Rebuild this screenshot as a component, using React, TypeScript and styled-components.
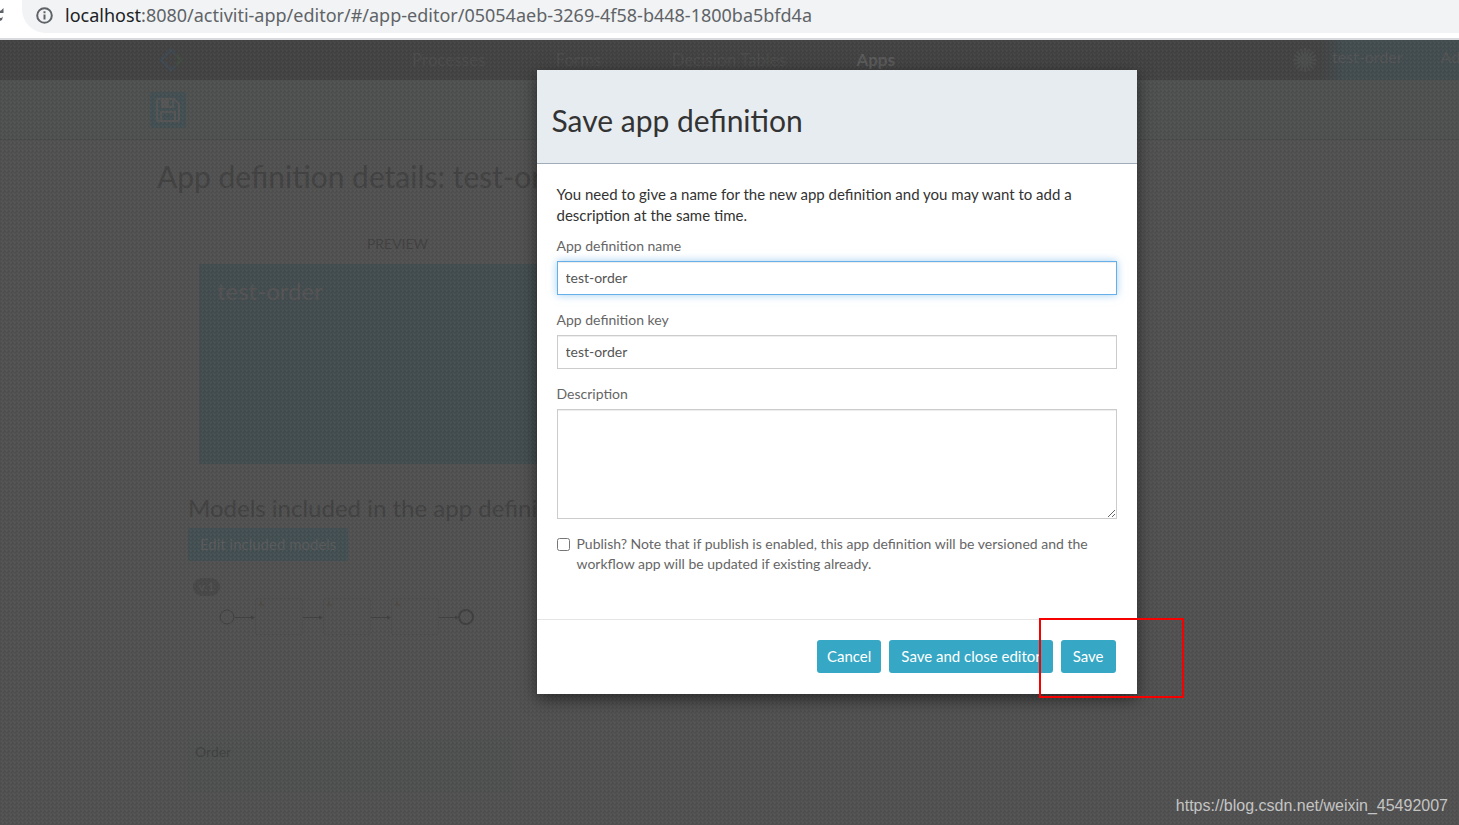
import React from "react";
import styled, { createGlobalStyle, css } from "styled-components";

const GlobalStyle = createGlobalStyle`
  *, *::before, *::after { box-sizing: border-box; }
  html, body, #root { height: 100%; }
  body {
    margin: 0;
    overflow: hidden;
    background: #515151;
    color: #333333;
    font-family: Lato, "Open Sans", sans-serif;
    font-size: 14px;
    line-height: 20px;
  }
  h1, h2, h3, p { margin: 0; font-weight: 400; }
  button, input, textarea { font: inherit; }
`;

const Shell = styled.div`
  display: flex;
  flex-direction: column;
  min-height: 100vh;
`;

const BrowserBar = styled.div`
  display: flex;
  align-items: flex-start;
  gap: 16px;
  height: 40px;
  background: #ffffff;
  border-bottom: 2px solid #d8dade;
  overflow: hidden;
`;

const ReloadButton = styled.button`
  width: 6px;
  height: 36px;
  padding: 0;
  border: 0;
  background: none;
  display: flex;
  justify-content: flex-end;
  align-items: flex-start;
`;

const Address = styled.div`
  flex: 1;
  display: flex;
  align-items: center;
  gap: 12px;
  height: 33px;
  padding: 0 0 3px 14px;
  background: #f1f3f4;
  border-radius: 0 0 0 24px;
`;

const Url = styled.span`
  font-family: "Noto Sans", "Open Sans", sans-serif;
  font-size: 18px;
  line-height: 24px;
  color: #5f6368;
  white-space: nowrap;
`;

const Host = styled.span`
  color: #202124;
`;

const Page = styled.div`
  position: relative;
  flex: 1;
  overflow: hidden;
  background: #515151;
`;

const Texture = styled.div`
  position: absolute;
  inset: 0;
  pointer-events: none;
  background-image:
    linear-gradient(45deg, rgba(0, 0, 0, 0.05) 25%, transparent 25% 75%, rgba(0, 0, 0, 0.05) 75%),
    linear-gradient(-45deg, rgba(255, 255, 255, 0.03) 25%, transparent 25% 75%, rgba(255, 255, 255, 0.03) 75%);
  background-size: 4px 4px;
  background-position: 0 0, 2px 2px;
`;

const TopNav = styled.header`
  display: flex;
  justify-content: space-between;
  height: 40px;
  padding-left: 158px;
  background: #434343;
  font-size: 17px;
  line-height: 40px;
`;

const NavStart = styled.div`
  display: flex;
  align-items: center;
  gap: 228px;
`;

const NavLinks = styled.nav`
  display: flex;
  gap: 70px;
`;

const NavLink = styled.a<{ $active?: boolean }>`
  color: ${(p) => (p.$active ? "#5a5a5a" : "#4b4b4b")};
  text-decoration: none;
  font-weight: ${(p) => (p.$active ? 700 : 400)};
`;

const NavEnd = styled.div`
  display: flex;
  align-items: center;
  gap: 4px;
`;

const Account = styled.div`
  display: flex;
  gap: 38px;
  width: 138px;
  height: 40px;
  padding-left: 11px;
  overflow: hidden;
  background: linear-gradient(90deg, #434343, #434d50 24px);
  color: #545454;
  font-size: 16px;
  line-height: 34px;
  white-space: nowrap;
`;

const Toolbar = styled.div`
  height: 60px;
  padding: 12px 150px;
  background: #4e5150;
  border-bottom: 1px solid #494b4b;
`;

const SaveTool = styled.button`
  display: flex;
  align-items: center;
  justify-content: center;
  width: 36px;
  height: 36px;
  padding: 0;
  border: 0;
  border-radius: 3px;
  background: #434f52;
`;

const Content = styled.main`
  padding: 16px 157px 0;
  color: #424242;
`;

const PageTitle = styled.h1`
  font-size: 30px;
  line-height: 40px;
  white-space: nowrap;
`;

const Section = styled.section`
  width: 450px;
  padding-left: 31px;
`;

const PreviewLabel = styled.div`
  padding: 38px 0 10px;
  text-align: center;
`;

const Tile = styled.div`
  height: 200px;
  margin-left: 11px;
  padding: 12px 18px;
  background: #434d50;
  color: #555353;
  font-size: 24px;
  line-height: 30px;
`;

const SectionTitle = styled.h2`
  padding: 29px 0 5px;
  font-size: 24px;
  line-height: 30px;
  white-space: nowrap;
`;

const EditButton = styled.button`
  height: 33px;
  padding: 0 12px 2px;
  border: 0;
  border-radius: 3px;
  background: #434f52;
  color: #5a5a5a;
  font-size: 15px;
  white-space: nowrap;
`;

const Model = styled.article`
  width: 324px;
  margin-top: 17px;
`;

const Version = styled.span`
  display: block;
  width: 27px;
  height: 18px;
  margin-left: 5px;
  border-radius: 9px;
  background: #484848;
  color: #525252;
  font-size: 12px;
  font-weight: 700;
  line-height: 18px;
  text-align: center;
`;

const Diagram = styled.svg`
  display: block;
  width: 324px;
  height: 136px;
`;

const ModelName = styled.div`
  height: 60px;
  padding: 10px 7px;
  background: linear-gradient(#515151, #4e5150 16px);
`;

const Dialog = styled.form`
  position: absolute;
  top: 30px;
  left: calc(50% - 193px);
  width: 600px;
  background: #ffffff;
  box-shadow: 0 5px 15px rgba(0, 0, 0, 0.5);
`;

const DialogHeader = styled.div`
  padding: 30px 15px 23px;
  background: #e7ecf0;
  border-bottom: 1px solid #a0acb8;
`;

const DialogTitle = styled.h2`
  font-size: 30px;
  line-height: 40px;
`;

const DialogBody = styled.div`
  display: flex;
  flex-direction: column;
  gap: 15px;
  padding: 20px 20px 45px;
  border-bottom: 1px solid #e5e5e5;
`;

const Intro = styled.p`
  margin-bottom: -5px;
  color: #333333;
  font-size: 15px;
  line-height: 21px;
`;

const Field = styled.div`
  display: flex;
  flex-direction: column;
  gap: 5px;
`;

const Label = styled.label`
  color: #666666;
`;

const control = css`
  width: 100%;
  border: 1px solid #cccccc;
  border-radius: 0;
  background: #ffffff;
  color: #555555;
  outline: 0;
  box-shadow: inset 0 1px 1px rgba(0, 0, 0, 0.075);
`;

const TextInput = styled.input<{ $focused?: boolean }>`
  ${control}
  height: 34px;
  padding: 5px 8px 7px;
  ${(p) =>
    p.$focused &&
    css`
      border-color: #66afe9;
      box-shadow: inset 0 1px 1px rgba(0, 0, 0, 0.075), 0 0 8px rgba(102, 175, 233, 0.6);
    `}
`;

const TextArea = styled.textarea`
  ${control}
  display: block;
  height: 110px;
  padding: 6px 8px;
  resize: vertical;
`;

const PublishLabel = styled.label`
  display: flex;
  align-items: flex-start;
  gap: 7px;
  color: #666666;
`;

const Checkbox = styled.input`
  flex: none;
  width: 13px;
  height: 13px;
  margin: 4px 0 0;
`;

const DialogFooter = styled.div`
  display: flex;
  justify-content: flex-end;
  gap: 8px;
  padding: 20px 21px 21px;
`;

const Button = styled.button<{ $compact?: boolean }>`
  height: 33px;
  padding: 0 ${(p) => (p.$compact ? 10 : 12)}px 2px;
  border: 0;
  border-radius: 3px;
  background: #36a7c4;
  color: #ffffff;
  font-size: 15px;
`;

const Highlight = styled.div`
  position: absolute;
  right: -47px;
  bottom: -4px;
  width: 145px;
  height: 80px;
  border: 2px solid #f60000;
  pointer-events: none;
`;

const Watermark = styled.div`
  position: absolute;
  right: 11px;
  bottom: 9px;
  color: #c4c4c4;
  font-family: "Liberation Sans", Arial, sans-serif;
  font-size: 16px;
  line-height: 20px;
`;

function InfoIcon() {
  return (
    <svg width="17" height="17" viewBox="0 0 17 17" fill="none" stroke="#5f6368" strokeWidth="2">
      <circle cx="8.5" cy="8.5" r="7.3" />
      <path d="M8.5 7.5V12.5M8.5 4.2V6.2" />
    </svg>
  );
}

function Logo() {
  return (
    <svg width="26" height="26" viewBox="0 0 26 26" fill="none" strokeWidth="3">
      <path d="M17 7L13 3L3 13L13 23L17 19" stroke="#404850" />
      <path d="M18 8L23 13L18 18" stroke="#424b41" />
    </svg>
  );
}

function Burst() {
  return (
    <svg width="24" height="24" viewBox="0 0 24 24" stroke="#4b4d4d" strokeWidth="2">
      <path d="M12 0V24M0 12H24M3.5 3.5L20.5 20.5M20.5 3.5L3.5 20.5M7.5 1L16.5 23M16.5 1L7.5 23M1 7.5L23 16.5M23 7.5L1 16.5" />
    </svg>
  );
}

function FloppyIcon() {
  return (
    <svg width="24" height="24" viewBox="0 0 24 24" fill="none" stroke="#555555" strokeWidth="2">
      <path d="M2 1H18L23 6V22Q23 23 22 23H2Q1 23 1 22V2Q1 1 2 1Z" />
      <path d="M5 23V14H19V23M6 1V9H17V1" />
      <path d="M7 1H12V8H7Z" fill="#555555" />
    </svg>
  );
}

function ProcessDiagram() {
  const tasks = [67, 135, 203];
  return (
    <Diagram viewBox="0 0 324 136" fill="none" stroke="#404040">
      <circle cx="39" cy="21" r="7" />
      {tasks.map((x) => (
        <g key={x}>
          <rect x={x + 0.5} y="2.5" width="47" height="36" rx="2" stroke="#4d4d4d" />
          <path d={`M${x + 4} 10q2-3 5 0M${x + 6} 5v3`} stroke="#4f4b47" strokeWidth="2" />
        </g>
      ))}
      <path d="M47 21.5H64M115 21.5H132M183 21.5H200M251 21.5H269" />
      <path
        d="M63 19.5L67 21.5L63 23.5ZM131 19.5L135 21.5L131 23.5ZM199 19.5L203 21.5L199 23.5ZM267 19.5L271 21.5L267 23.5Z"
        fill="#404040"
        stroke="none"
      />
      <circle cx="278" cy="21" r="7" strokeWidth="2" />
    </Diagram>
  );
}

export default function App() {
  return (
    <>
      <GlobalStyle />
      <Shell>
        <BrowserBar>
          <ReloadButton aria-label="Reload">
            <svg width="6" height="24" viewBox="0 0 6 24" fill="#5f6368">
              <path d="M3.5 8V13H-3V11.5L1 10.5ZM0 18Q2 18 3 16.5L2 20L0 21Z" />
            </svg>
          </ReloadButton>
          <Address>
            <InfoIcon />
            <Url>
              <Host>localhost</Host>:8080/activiti-app/editor/#/app-editor/05054aeb-3269-4f58-b448-1800ba5bfd4a
            </Url>
          </Address>
        </BrowserBar>
        <Page>
          <TopNav>
            <NavStart>
              <Logo />
              <NavLinks>
                <NavLink href="#processes">Processes</NavLink>
                <NavLink href="#forms">Forms</NavLink>
                <NavLink href="#tables">Decision Tables</NavLink>
                <NavLink href="#apps" $active>Apps</NavLink>
              </NavLinks>
            </NavStart>
            <NavEnd>
              <Burst />
              <Account>
                <span>test-order</span>
                <span>Ad</span>
              </Account>
            </NavEnd>
          </TopNav>
          <Toolbar>
            <SaveTool aria-label="Save">
              <FloppyIcon />
            </SaveTool>
          </Toolbar>
          <Content>
            <PageTitle>App definition details: test-order</PageTitle>
            <Section>
              <PreviewLabel>PREVIEW</PreviewLabel>
              <Tile>test-order</Tile>
              <SectionTitle>Models included in the app definition</SectionTitle>
              <EditButton>Edit included models</EditButton>
              <Model>
                <Version>v.1</Version>
                <ProcessDiagram />
                <ModelName>Order</ModelName>
              </Model>
            </Section>
          </Content>
          <Texture />
          <Dialog role="dialog" aria-labelledby="dialog-title" onSubmit={(e) => e.preventDefault()}>
            <DialogHeader>
              <DialogTitle id="dialog-title">Save app definition</DialogTitle>
            </DialogHeader>
            <DialogBody>
              <Intro>
                You need to give a name for the new app definition and you may want to add a description at the same time.
              </Intro>
              <Field>
                <Label htmlFor="app-name">App definition name</Label>
                <TextInput id="app-name" defaultValue="test-order" $focused />
              </Field>
              <Field>
                <Label htmlFor="app-key">App definition key</Label>
                <TextInput id="app-key" defaultValue="test-order" />
              </Field>
              <Field>
                <Label htmlFor="app-description">Description</Label>
                <TextArea id="app-description" />
              </Field>
              <PublishLabel>
                <Checkbox type="checkbox" />
                <span>
                  Publish? Note that if publish is enabled, this app definition will be versioned and the workflow app
                  will be updated if existing already.
                </span>
              </PublishLabel>
            </DialogBody>
            <DialogFooter>
              <Button type="button" $compact>Cancel</Button>
              <Button type="button">Save and close editor</Button>
              <Button type="submit">Save</Button>
            </DialogFooter>
            <Highlight />
          </Dialog>
          <Watermark>https://blog.csdn.net/weixin_45492007</Watermark>
        </Page>
      </Shell>
    </>
  );
}
